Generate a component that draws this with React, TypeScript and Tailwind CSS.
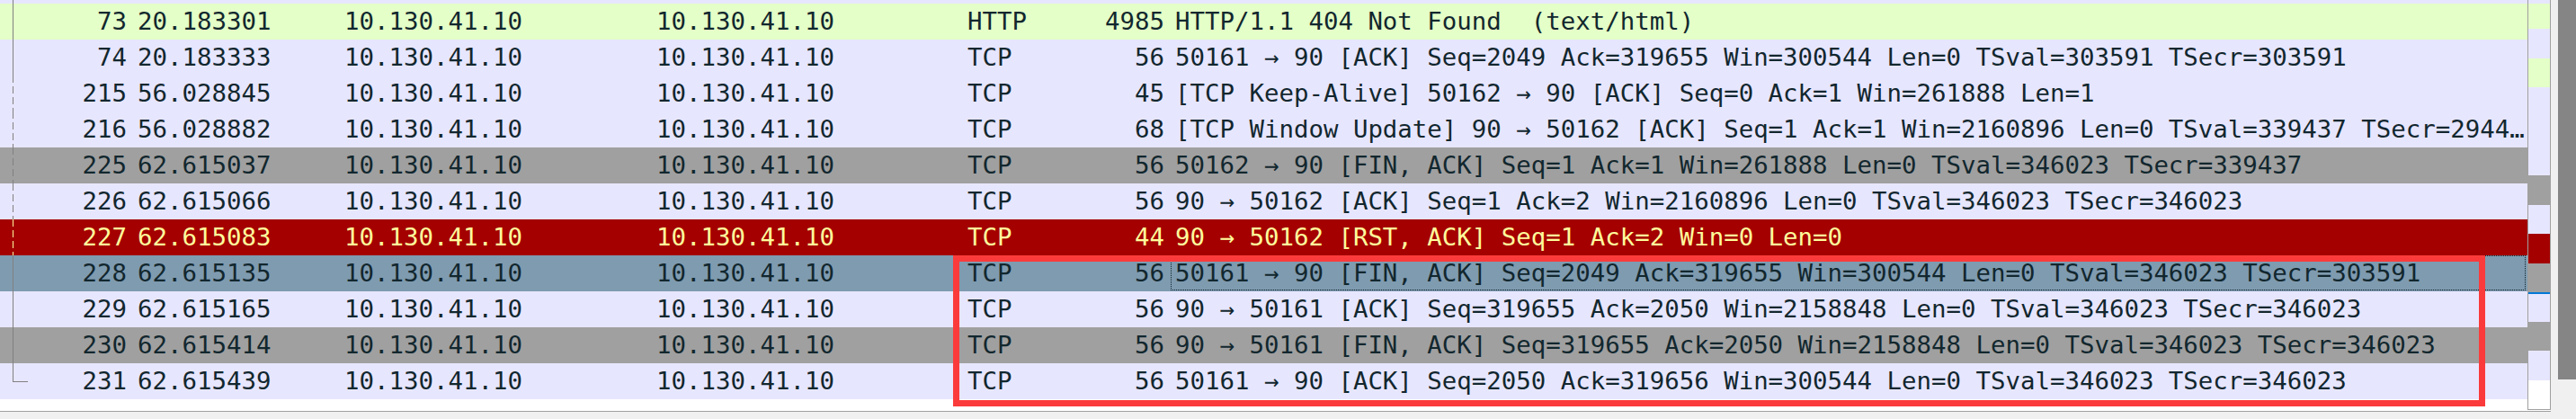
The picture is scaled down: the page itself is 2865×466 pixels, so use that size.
import React from 'react'

// Wireshark packet list: colored rows, conversation line, intelligent scrollbar

type Kind = 'http' | 'tcp' | 'gray' | 'rst' | 'sel'
type Line = 'solid' | 'dashed' | 'end'

const rows: { no: string; time: string; proto: string; len: string; info: string; kind: Kind; line: Line }[] = [
  { no: '73', time: '20.183301', proto: 'HTTP', len: '4985', info: 'HTTP/1.1 404 Not Found  (text/html)', kind: 'http', line: 'solid' },
  { no: '74', time: '20.183333', proto: 'TCP', len: '56', info: '50161 → 90 [ACK] Seq=2049 Ack=319655 Win=300544 Len=0 TSval=303591 TSecr=303591', kind: 'tcp', line: 'solid' },
  { no: '215', time: '56.028845', proto: 'TCP', len: '45', info: '[TCP Keep-Alive] 50162 → 90 [ACK] Seq=0 Ack=1 Win=261888 Len=1', kind: 'tcp', line: 'dashed' },
  { no: '216', time: '56.028882', proto: 'TCP', len: '68', info: '[TCP Window Update] 90 → 50162 [ACK] Seq=1 Ack=1 Win=2160896 Len=0 TSval=339437 TSecr=294437', kind: 'tcp', line: 'dashed' },
  { no: '225', time: '62.615037', proto: 'TCP', len: '56', info: '50162 → 90 [FIN, ACK] Seq=1 Ack=1 Win=261888 Len=0 TSval=346023 TSecr=339437', kind: 'gray', line: 'dashed' },
  { no: '226', time: '62.615066', proto: 'TCP', len: '56', info: '90 → 50162 [ACK] Seq=1 Ack=2 Win=2160896 Len=0 TSval=346023 TSecr=346023', kind: 'tcp', line: 'dashed' },
  { no: '227', time: '62.615083', proto: 'TCP', len: '44', info: '90 → 50162 [RST, ACK] Seq=1 Ack=2 Win=0 Len=0', kind: 'rst', line: 'dashed' },
  { no: '228', time: '62.615135', proto: 'TCP', len: '56', info: '50161 → 90 [FIN, ACK] Seq=2049 Ack=319655 Win=300544 Len=0 TSval=346023 TSecr=303591', kind: 'sel', line: 'solid' },
  { no: '229', time: '62.615165', proto: 'TCP', len: '56', info: '90 → 50161 [ACK] Seq=319655 Ack=2050 Win=2158848 Len=0 TSval=346023 TSecr=346023', kind: 'tcp', line: 'solid' },
  { no: '230', time: '62.615414', proto: 'TCP', len: '56', info: '90 → 50161 [FIN, ACK] Seq=319655 Ack=2050 Win=2158848 Len=0 TSval=346023 TSecr=346023', kind: 'gray', line: 'solid' },
  { no: '231', time: '62.615439', proto: 'TCP', len: '56', info: '50161 → 90 [ACK] Seq=2050 Ack=319656 Win=300544 Len=0 TSval=346023 TSecr=346023', kind: 'tcp', line: 'end' },
]

const rowStyle: Record<Kind, string> = {
  http: 'bg-[#e4ffc7] text-[#12272e]',
  tcp: 'bg-[#e7e6ff] text-[#12272e]',
  gray: 'bg-[#a0a0a0] text-[#12272e]',
  rst: 'bg-[#a40000] text-[#fffc9c]',
  sel: 'bg-[#7f9bb0] text-[#12272e]',
}

function TreeLine({ line, kind }: { line: Line; kind: Kind }) {
  if (line === 'dashed') {
    return (
      <div
        className={`absolute left-[14px] top-0 bottom-0 w-px ${
          kind === 'rst'
            ? 'bg-[repeating-linear-gradient(to_bottom,#fffc9c_0px,#fffc9c_8px,transparent_8px,transparent_12px)]'
            : 'bg-[repeating-linear-gradient(to_bottom,#808080_0px,#808080_8px,transparent_8px,transparent_12px)]'
        }`}
      />
    )
  }
  if (line === 'end') {
    return (
      <>
        <div className="absolute left-[14px] top-0 h-[21px] w-px bg-[#808080]" />
        <div className="absolute left-[14px] top-[20px] h-px w-[17px] bg-[#808080]" />
      </>
    )
  }
  return <div className="absolute left-[14px] top-0 bottom-0 w-px bg-[#808080]" />
}

const minimap: [string, string][] = [
  ['h-[4px]', 'bg-[#e7e6ff]'],
  ['h-[28px]', 'bg-[#e4ffc7]'],
  ['h-[33px]', 'bg-[#e7e6ff]'],
  ['h-[32px]', 'bg-[#e4ffc7]'],
  ['h-[98px]', 'bg-[#e7e6ff]'],
  ['h-[33px]', 'bg-[#a0a0a0]'],
  ['h-[32px]', 'bg-[#e7e6ff]'],
  ['h-[33px]', 'bg-[#a40000]'],
  ['h-[32px]', 'bg-[#a0a0a0]'],
  ['h-[2px]', 'bg-[#0078d7]'],
  ['h-[31px]', 'bg-[#e7e6ff]'],
  ['h-[32px]', 'bg-[#a0a0a0]'],
  ['h-[33px]', 'bg-[#e7e6ff]'],
  ['h-[32px]', 'bg-white'],
]

export default function App() {
  return (
    <div className="flex w-[2865px] h-[466px] overflow-hidden bg-[#f0f0f0] font-['DejaVu_Sans_Mono',monospace] text-[27.4px] leading-[40px]">
      <div className="flex flex-col w-[2837px] shrink-0">
        <div className="flex h-[457px] bg-white">
          {/* packet list */}
          <div className="relative w-[2811px] shrink-0">
            <div className="relative h-[4px] bg-[#e7e6ff]">
              <div className="absolute left-[14px] top-0 bottom-0 w-px bg-[#808080]" />
            </div>
            {rows.map((r) => (
              <div key={r.no} className={`relative flex h-[40px] whitespace-pre ${rowStyle[r.kind]}`}>
                <div className="relative w-[147px] shrink-0 pr-[6px] text-right">
                  <TreeLine line={r.line} kind={r.kind} />
                  {r.no}
                </div>
                <div className="w-[230px] shrink-0 px-[6px]">{r.time}</div>
                <div className="w-[347px] shrink-0 px-[6px]">10.130.41.10</div>
                <div className="w-[346px] shrink-0 px-[6px]">10.130.41.10</div>
                <div className="w-[110px] shrink-0 px-[6px]">{r.proto}</div>
                <div className="w-[121px] shrink-0 pr-[6px] text-right">{r.len}</div>
                <div className="relative min-w-0 flex-1 overflow-hidden text-ellipsis whitespace-pre pl-[6px] pr-[2px]">
                  {r.info}
                  {r.kind === 'sel' && (
                    <div className="absolute left-px right-[2px] top-0 bottom-px border border-dotted border-[#12272e]" />
                  )}
                </div>
              </div>
            ))}
            {/* annotation box */}
            <div className="pointer-events-none absolute left-[1060px] top-[284px] h-[168px] w-[1704px] border-[7px] border-[#fb3b3b]" />
          </div>
          {/* intelligent scrollbar minimap */}
          <div className="flex h-[456px] w-[26px] shrink-0 flex-col border-x border-b border-[#a0a0a0]">
            {minimap.map(([h, bg], i) => (
              <div key={i} className={`${h} shrink-0 ${bg}`} />
            ))}
          </div>
        </div>
        <div className="h-px bg-[#a0a0a0]" />
        <div className="flex-1 bg-[#f0f0f0]" />
      </div>
      {/* scrollbar */}
      <div className="w-[28px] shrink-0 bg-[#f0f0f0] pl-[8px]">
        <div className="h-[422px] w-[20px] bg-[#858585]" />
      </div>
    </div>
  )
}
